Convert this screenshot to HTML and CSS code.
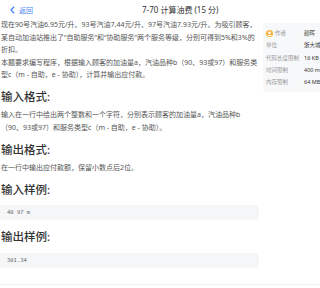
FILE: index.html
```html
<!DOCTYPE html>
<html lang="zh-CN">
<head>
  <meta charset="UTF-8" />
  <meta name="viewport" content="width=device-width, initial-scale=1.0"/>
  <title>7-70 计算油费</title>
  <link rel="stylesheet" href="styles.css">
</head>
<body>

  <div class="topbar">
    <a class="back" href="#">
      <svg width="5" height="8" viewBox="0 0 5 8"><path d="M4 0.8 L1 4 L4 7.2" fill="none" stroke="#3f86f4" stroke-width="1.3"/></svg>
      返回
    </a>
    <div class="title">7-70 计算油费 (15 分)</div>
  </div>

  <div class="layout">
    <div class="problem">
      <p>现在90号汽油6.95元/升、93号汽油7.44元/升、97号汽油7.93元/升。为吸引顾客，某自动加油站推出了“自助服务”和“协助服务”两个服务等级，分别可得到5%和3%的折扣。</p>
      <p>本题要求编写程序，根据输入顾客的加油量a，汽油品种b（90、93或97）和服务类型c（m - 自助，e - 协助），计算并输出应付款。</p>

      <h3>输入格式:</h3>
      <p>输入在一行中给出两个整数和一个字符，分别表示顾客的加油量a，汽油品种b（90、93或97）和服务类型c（m - 自助，e - 协助）。</p>

      <h3>输出格式:</h3>
      <p>在一行中输出应付款额，保留小数点后2位。</p>

      <h3>输入样例:</h3>
      <pre class="sample">40 97 m</pre>

      <h3>输出样例:</h3>
      <pre class="sample">301.34</pre>
    </div>

    <div class="info">
      <div class="row">
        <span class="label">
          <svg width="7" height="7" viewBox="0 0 10 10"><circle cx="5" cy="5" r="5" fill="#f6b13a"/><circle cx="5" cy="4" r="1.9" fill="#fff"/><path d="M1.8 8.6 C2.6 6.6 7.4 6.6 8.2 8.6" fill="#fff"/></svg>
          作者
        </span>
        <span class="value">颜晖</span>
      </div>
      <div class="row"><span class="label">单位</span><span class="value">浙大城市学院</span></div>
      <div class="row"><span class="label">代码长度限制</span><span class="value">16 KB</span></div>
      <div class="row"><span class="label">时间限制</span><span class="value">400 ms</span></div>
      <div class="row"><span class="label">内存限制</span><span class="value">64 MB</span></div>
    </div>
  </div>

  <div class="footer-line"></div>

</body>
</html>
```

FILE: styles.css
```css
body {
  margin: 0;
  background: #fff;
  font-family: "Noto Sans", "Noto Sans CJK SC", sans-serif;
  color: #555;
  overflow: hidden;
}

.topbar {
  display: flex;
  align-items: center;
  height: 19px;
}

.back {
  display: flex;
  align-items: center;
  gap: 4px;
  margin-left: 10px;
  width: 132px;
  font-size: 7px;
  color: #3f86f4;
  text-decoration: none;
}

.title {
  font-size: 8px;
  color: #333;
}

.layout {
  display: flex;
  align-items: flex-start;
  gap: 4px;
}

.problem {
  width: 258px;
  flex-shrink: 0;
  padding-left: 1px;
}

.problem p {
  margin: 0;
  font-size: 7px;
  line-height: 12.5px;
}

.problem h3 {
  margin: 7.5px 0 4px;
  font-size: 11.5px;
  font-weight: 500;
  line-height: 16px;
  color: #333;
}

.sample {
  margin: 7.5px 0 9px -1px;
  padding: 0 7px;
  height: 15px;
  line-height: 15px;
  background: #f5f6f8;
  border-radius: 2px;
  font-family: "DejaVu Sans Mono", monospace;
  font-size: 5.5px;
  color: #666;
}

.info {
  flex: 1;
  margin-top: 4px;
  padding: 4px 0 4px 3px;
  background: #f7f8fa;
  border-radius: 3px 0 0 3px;
  overflow: hidden;
}

.row {
  display: flex;
  height: 12.3px;
  align-items: center;
  font-size: 5.5px;
}

.label {
  display: flex;
  align-items: center;
  gap: 2px;
  width: 38px;
  flex-shrink: 0;
  color: #999;
}

.value {
  color: #333;
  white-space: nowrap;
}

.footer-line {
  margin-top: 7px;
  height: 1px;
  background: #f0f1f3;
}
```
